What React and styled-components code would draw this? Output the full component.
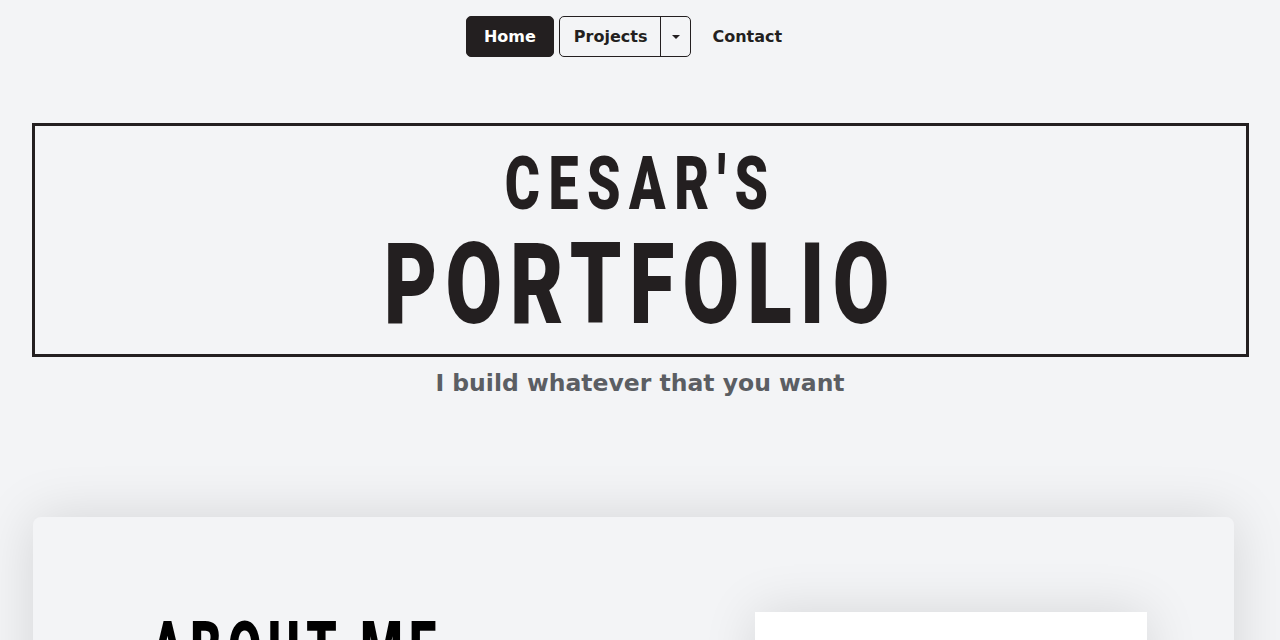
import React from "react";
import styled, { createGlobalStyle } from "styled-components";

const Global = createGlobalStyle`
  html, body { margin: 0; padding: 0; background: #f3f4f6; }
  body { font-family: "DejaVu Sans", sans-serif; color: #231f20; overflow: hidden; }
`;

const Page = styled.div`
  min-height: 640px;
  background: #f3f4f6;
`;

const Nav = styled.nav`
  display: flex;
  justify-content: center;
  align-items: center;
  padding: 16px 14px 0 0;
  gap: 5px;
`;

const NavButton = styled.a`
  display: inline-flex;
  align-items: center;
  justify-content: center;
  height: 41px;
  box-sizing: border-box;
  padding: 0 ${(p) => (p.$active ? "17px" : "17px 0 15px")};
  border-radius: 5px;
  font-family: "DejaVu Sans", sans-serif;
  font-weight: 700;
  font-size: 16px;
  text-decoration: none;
  color: ${(p) => (p.$active ? "#ffffff" : "#231f20")};
  background: ${(p) => (p.$active ? "#231f20" : "transparent")};
  border: 1.5px solid ${(p) => (p.$active ? "#231f20" : "transparent")};
`;

const SplitGroup = styled.div`
  display: inline-flex;
  height: 41px;
  box-sizing: border-box;
  border: 1.5px solid #231f20;
  border-radius: 5px;
  overflow: hidden;
`;

const SplitMain = styled.a`
  display: inline-flex;
  align-items: center;
  padding: 0 13px 0 14px;
  font-weight: 700;
  font-size: 16px;
  color: #231f20;
  text-decoration: none;
  border-right: 1.5px solid #231f20;
`;

const SplitToggle = styled.button`
  width: 29px;
  border: none;
  background: transparent;
  display: inline-flex;
  align-items: center;
  justify-content: center;
  padding: 0;
  cursor: pointer;
`;

const Caret = styled.span`
  width: 0;
  height: 0;
  border-left: 4px solid transparent;
  border-right: 4px solid transparent;
  border-top: 4px solid #231f20;
`;

const Hero = styled.header`
  margin: 66px 31px 0 32px;
  height: 234px;
  box-sizing: border-box;
  padding-top: 8px;
  border: 3px solid #231f20;
  display: flex;
  flex-direction: column;
  align-items: center;
  justify-content: center;
  gap: 5px;
`;

const Condensed = styled.span`
  display: inline-block;
  font-family: Roboto, "DejaVu Sans Condensed", sans-serif;
  font-weight: 900;
  font-size: ${(p) => p.$size}px;
  line-height: ${(p) => p.$size}px;
  letter-spacing: ${(p) => p.$spacing}px;
  transform: scaleX(${(p) => p.$scale});
  transform-origin: ${(p) => p.$origin || "center"};
  white-space: nowrap;
`;

const HeroTitle = styled.h1`
  margin: 0;
  display: contents;
  color: #231f20;
`;

const Subtitle = styled.p`
  margin: 12px 0 0;
  text-align: center;
  font-family: "DejaVu Sans", sans-serif;
  font-weight: 700;
  font-size: 23.5px;
  color: #5b5e63;
`;

const Card = styled.section`
  margin: 120px 0 0 33px;
  width: 1201px;
  height: 300px;
  border-radius: 8px;
  background: #f3f4f6;
  box-shadow: 0 0 55px rgba(0, 0, 0, 0.13);
  display: grid;
  grid-template-columns: 1fr 392px;
  padding: 95px 87px 0 115px;
  box-sizing: border-box;
`;

const SectionTitle = styled.h2`
  margin: 0 0 0 3px;
  color: #000;
`;

const Photo = styled.div`
  background: #ffffff;
  height: 300px;
  box-shadow: 0 0 50px rgba(0, 0, 0, 0.12);
`;

export default function App() {
  return (
    <Page>
      <Global />
      <Nav>
        <NavButton $active href="#">Home</NavButton>
        <SplitGroup>
          <SplitMain href="#">Projects</SplitMain>
          <SplitToggle aria-label="More projects"><Caret /></SplitToggle>
        </SplitGroup>
        <NavButton href="#">Contact</NavButton>
      </Nav>
      <Hero>
        <HeroTitle>
          <Condensed $size={74.5} $spacing={11.8} $scale={0.72}>CESAR'S</Condensed>
          <Condensed $size={114} $spacing={11.2} $scale={0.72}>PORTFOLIO</Condensed>
        </HeroTitle>
      </Hero>
      <Subtitle>I build whatever that you want</Subtitle>
      <Card>
        <SectionTitle>
          <Condensed $size={74.5} $spacing={9.8} $scale={0.65} $origin="left">ABOUT ME</Condensed>
        </SectionTitle>
        <Photo />
      </Card>
    </Page>
  );
}
